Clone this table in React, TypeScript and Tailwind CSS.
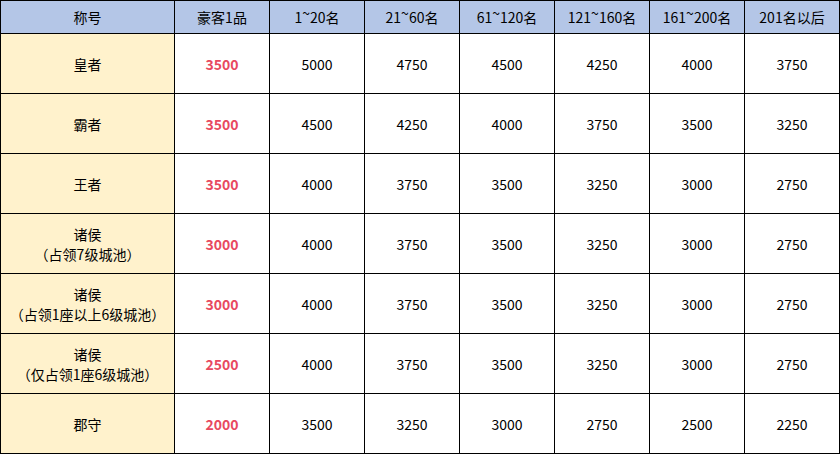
const HEADERS = ["称号", "豪客1品", "1~20名", "21~60名", "61~120名", "121~160名", "161~200名", "201名以后"];

type Row = { title: string; sub?: string; top: number; values: number[] };

const ROWS: Row[] = [
  { title: "皇者", top: 3500, values: [5000, 4750, 4500, 4250, 4000, 3750] },
  { title: "霸者", top: 3500, values: [4500, 4250, 4000, 3750, 3500, 3250] },
  { title: "王者", top: 3500, values: [4000, 3750, 3500, 3250, 3000, 2750] },
  { title: "诸侯", sub: "（占领7级城池）", top: 3000, values: [4000, 3750, 3500, 3250, 3000, 2750] },
  { title: "诸侯", sub: "（占领1座以上6级城池）", top: 3000, values: [4000, 3750, 3500, 3250, 3000, 2750] },
  { title: "诸侯", sub: "（仅占领1座6级城池）", top: 2500, values: [4000, 3750, 3500, 3250, 3000, 2750] },
  { title: "郡守", top: 2000, values: [3500, 3250, 3000, 2750, 2500, 2250] },
];

const cell = "flex flex-col items-center justify-center border-l border-t border-black text-center";

// SimSun draws the tilde up high; lift it so the header reads the same
function Header({ text }: { text: string }) {
  const parts = text.split("~");
  if (parts.length === 1) return <>{text}</>;
  return (
    <span>
      {parts[0]}
      <span className="relative -top-[4px]">~</span>
      {parts[1]}
    </span>
  );
}

export default function App() {
  return (
    <div
      className="w-[840px] h-[454px] bg-white text-black text-[14px] leading-[20px]"
      style={{ fontFamily: '"SimSun", "Noto Sans CJK SC", sans-serif' }}
    >
      <div className="grid grid-cols-[174px_repeat(7,95px)] grid-rows-[33px_repeat(7,60px)] border-r border-b border-black w-[840px]">
        {HEADERS.map((h) => (
          <div key={h} className={`${cell} bg-[#b4c6e7]`}>
            <Header text={h} />
          </div>
        ))}
        {ROWS.map((row, i) => (
          <div key={i} className="contents">
            <div className={`${cell} bg-[#fff2cc]`}>
              <span>{row.title}</span>
              {row.sub && <span>{row.sub}</span>}
            </div>
            <div className={`${cell} font-bold text-[#e8495f]`}>{row.top}</div>
            {row.values.map((v, j) => (
              <div key={j} className={cell}>
                {v}
              </div>
            ))}
          </div>
        ))}
      </div>
    </div>
  );
}
